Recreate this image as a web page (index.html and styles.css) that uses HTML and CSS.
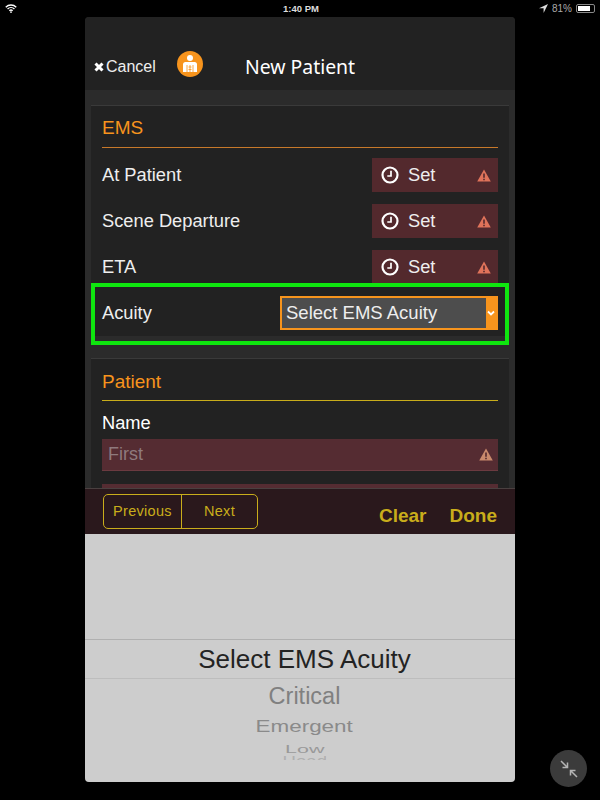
FILE: index.html
```html
<!DOCTYPE html>
<html lang="en">
<head>
  <meta charset="UTF-8" />
  <title>New Patient</title>
  <link rel="stylesheet" href="styles.css">
</head>
<body>

  <div class="status-bar">
    <svg class="wifi" width="12" height="9" viewBox="0 0 16 12">
      <path d="M1 4.200a10 10 0 0 1 14 0M3.400 6.700a6.600 6.600 0 0 1 9.200 0M5.800 9a3.200 3.200 0 0 1 4.400 0" fill="none" stroke="#fff" stroke-width="1.800"/>
      <circle cx="8" cy="10.800" r="1.200" fill="#fff"/>
    </svg>
    <span class="status-time">1:40 PM</span>
    <div class="status-right">
      <svg width="9" height="9" viewBox="0 0 9 9"><path d="M9 0 0 4.200h4.600V9z" fill="#ddd"/></svg>
      <span>81%</span>
      <div class="battery"><div class="battery-fill"></div></div>
    </div>
  </div>

  <div class="modal">
    <div class="modal-header">
      <div class="cancel">
        <svg width="10" height="10" viewBox="0 0 10 10"><path d="M1.500 1.500 8.500 8.500M8.500 1.500 1.500 8.500" stroke="#fff" stroke-width="3"/></svg>
        <span>Cancel</span>
      </div>
      <div class="patient-icon">
        <svg width="22" height="22" viewBox="0 0 22 22">
          <circle cx="11" cy="5" r="3" fill="#fff"/>
          <path d="M4 19v-7.500Q4 9 6.500 9h9q2.500 0 2.500 2.500V19z" fill="#fff"/>
          <path d="M8 12v7M14 12v7M11 12v7M9.500 14h3M9.500 16.500h3" stroke="#f7941d" stroke-width=".8" fill="none"/>
        </svg>
      </div>
      <h1>New Patient</h1>
    </div>

    <div class="form-scroll">
      <section class="panel">
        <h2>EMS</h2>
        <div class="row">
          <span>At Patient</span>
          <div class="set-btn">
            <svg width="18" height="18" viewBox="0 0 18 18"><circle cx="9" cy="9" r="7.500" fill="none" stroke="#fff" stroke-width="2.200"/><path d="M10 4.800V10H6.300" fill="none" stroke="#fff" stroke-width="1.700"/></svg>
            <span>Set</span>
            <svg width="14" height="13" viewBox="0 0 14 13"><path d="M7 .5 13.800 12.500H.2z" fill="#e0735a"/><path d="M6.200 4.500h1.600v4.300H6.200zM6.200 9.700h1.600v1.500H6.200z" fill="#53292d"/></svg>
          </div>
        </div>
        <div class="row">
          <span>Scene Departure</span>
          <div class="set-btn">
            <svg width="18" height="18" viewBox="0 0 18 18"><circle cx="9" cy="9" r="7.500" fill="none" stroke="#fff" stroke-width="2.200"/><path d="M10 4.800V10H6.300" fill="none" stroke="#fff" stroke-width="1.700"/></svg>
            <span>Set</span>
            <svg width="14" height="13" viewBox="0 0 14 13"><path d="M7 .5 13.800 12.500H.2z" fill="#e0735a"/><path d="M6.200 4.500h1.600v4.300H6.200zM6.200 9.700h1.600v1.500H6.200z" fill="#53292d"/></svg>
          </div>
        </div>
        <div class="row">
          <span>ETA</span>
          <div class="set-btn">
            <svg width="18" height="18" viewBox="0 0 18 18"><circle cx="9" cy="9" r="7.500" fill="none" stroke="#fff" stroke-width="2.200"/><path d="M10 4.800V10H6.300" fill="none" stroke="#fff" stroke-width="1.700"/></svg>
            <span>Set</span>
            <svg width="14" height="13" viewBox="0 0 14 13"><path d="M7 .5 13.800 12.500H.2z" fill="#e0735a"/><path d="M6.200 4.500h1.600v4.300H6.200zM6.200 9.700h1.600v1.500H6.200z" fill="#53292d"/></svg>
          </div>
        </div>
        <div class="row acuity-row">
          <span>Acuity</span>
          <div class="acuity-select">
            <span class="acuity-value">Select EMS Acuity</span>
            <div class="acuity-arrow">
              <svg width="8" height="6" viewBox="0 0 8 6"><path d="M1 1.500 4 4.500 7 1.500" fill="none" stroke="#fff" stroke-width="1.800"/></svg>
            </div>
          </div>
        </div>
      </section>

      <section class="panel patient-panel">
        <h2>Patient</h2>
        <div class="field-label">Name</div>
        <div class="text-field">
          <span>First</span>
          <svg width="14" height="13" viewBox="0 0 14 13"><path d="M7 .5 13.800 12.500H.2z" fill="#c98a6c"/><path d="M6.200 4.500h1.600v4.300H6.200zM6.200 9.700h1.600v1.500H6.200z" fill="#53292d"/></svg>
        </div>
        <div class="text-field"></div>
      </section>

      <div class="keyboard-bar">
        <div class="nav-group">
          <div class="nav-btn">Previous</div>
          <div class="nav-btn">Next</div>
        </div>
        <div class="bar-actions">
          <span>Clear</span>
          <span>Done</span>
        </div>
      </div>
    </div>

    <div class="picker">
      <div class="picker-selected">Select EMS Acuity</div>
      <div class="picker-item item-1">Critical</div>
      <div class="picker-item item-2">Emergent</div>
      <div class="picker-item item-3">Low</div>
      <div class="picker-item item-4">Head</div>
    </div>
  </div>

  <div class="zoom-btn">
    <svg width="20" height="20" viewBox="0 0 20 20">
      <path d="M2 2 8.500 8.500M8.500 3.500V8.500H3.500M18 18 11.500 11.500M11.500 16.500V11.500H16.500" fill="none" stroke="#b4b4b4" stroke-width="1.500"/>
    </svg>
  </div>

</body>
</html>
```

FILE: styles.css
```css
html, body {
  margin: 0;
  height: 800px;
  overflow: hidden;
}

body {
  position: relative;
  background-color: #000;
  font-family: "Liberation Sans", Arial, sans-serif;
  color: #fff;
}

.status-bar {
  display: flex;
  align-items: center;
  justify-content: space-between;
  position: relative;
  height: 16px;
  padding: 0 5px;
  font-size: 10px;
  color: #ddd;
}

.status-time {
  position: absolute;
  left: 283px;
  top: 3px;
  font-weight: bold;
  font-size: 9.5px;
}

.status-right {
  display: flex;
  align-items: center;
  gap: 4px;
  color: #aaa;
}

.battery {
  width: 15px;
  height: 5px;
  padding: 1px;
  border: 1px solid #888;
  border-radius: 2px;
}

.battery-fill {
  width: 81%;
  height: 100%;
  background-color: #fff;
}

.modal {
  display: flex;
  flex-direction: column;
  width: 430px;
  height: 765px;
  margin: 1px 0 0 85px;
  border-radius: 4px;
  overflow: hidden;
  background-color: #232323;
}

.modal-header {
  display: flex;
  align-items: center;
  flex-shrink: 0;
  height: 73px;
  padding: 26px 0 0 9px;
  box-sizing: border-box;
  background-color: #222;
}

.cancel {
  display: flex;
  align-items: center;
  gap: 2px;
  width: 83px;
  font-size: 16px;
  color: #eee;
}

.patient-icon {
  display: flex;
  align-items: center;
  justify-content: center;
  width: 26px;
  height: 26px;
  margin-bottom: 5px;
  border-radius: 50%;
  background-color: #f7941d;
}

.modal-header h1 {
  margin: 0 0 0 42px;
  font-family: "Noto Sans", sans-serif;
  font-size: 19.4px;
  font-weight: 400;
}

.form-scroll {
  position: relative;
  flex-shrink: 0;
  height: 444px;
  padding: 15px 6px 0;
  overflow: hidden;
  box-sizing: border-box;
  background-color: #2b2b2b;
}

.panel {
  padding: 0 11px;
  border-top: 1px solid #3a3a3a;
  background-color: #222;
}

.panel h2 {
  margin: 0;
  padding: 10px 0 7px;
  border-bottom: 1px solid #c8792a;
  font-size: 19px;
  line-height: 24px;
  font-weight: 400;
  color: #f7941d;
}

.row {
  display: flex;
  align-items: center;
  justify-content: space-between;
  height: 46px;
  font-size: 18.3px;
  color: #eee;
}

.panel h2 + .row {
  margin-top: 4px;
}

.set-btn {
  display: flex;
  align-items: center;
  width: 126px;
  height: 34px;
  padding: 0 7px 0 9px;
  box-sizing: border-box;
  background-color: #53292d;
}

.set-btn span {
  flex: 1;
  margin-left: 9px;
}

.acuity-row {
  position: relative;
  margin-bottom: 22px;
}

/* green callout drawn over the row and the ETA button above it */
.acuity-row::after {
  content: "";
  position: absolute;
  top: -7px;
  bottom: -9px;
  left: -11px;
  right: -11px;
  border: 4px solid #0fe60f;
}

.acuity-select {
  display: flex;
  width: 218px;
  height: 34px;
  box-sizing: border-box;
  border: 2px solid #f7941d;
  background-color: #4d4d4d;
}

.acuity-value {
  flex: 1;
  padding-left: 4px;
  line-height: 29px;
  font-size: 18.5px;
}

.acuity-arrow {
  display: flex;
  align-items: center;
  justify-content: center;
  width: 10px;
  background-color: #f7941d;
}

.patient-panel h2 {
  padding: 11px 0 6px;
  border-bottom-color: #c9ad1b;
}

.field-label {
  margin-top: 12px;
  font-size: 18.3px;
  line-height: 20px;
  color: #fff;
}

.text-field {
  display: flex;
  align-items: center;
  justify-content: space-between;
  height: 31px;
  margin-top: 6px;
  padding: 0 5px 0 6px;
  border-bottom: 1px solid #6b3a40;
  background-color: #552c32;
  font-size: 18px;
  color: #8f7a7d;
}

.text-field + .text-field {
  margin-top: 13px;
}

.keyboard-bar {
  position: absolute;
  left: 0;
  right: 0;
  bottom: 0;
  display: flex;
  align-items: center;
  justify-content: space-between;
  height: 46px;
  padding: 0 18px;
  box-sizing: border-box;
  border-top: 1px solid #4a4040;
  background-color: #2a181c;
}

.nav-group {
  display: flex;
  width: 155px;
  height: 35px;
  box-sizing: border-box;
  border: 1px solid #c9ad1b;
  border-radius: 5px;
}

.nav-btn {
  flex: 0 0 77px;
  line-height: 33px;
  text-align: center;
  font-size: 14.5px;
  letter-spacing: .3px;
  color: #c9ad1b;
}

.nav-btn + .nav-btn {
  flex: 1;
  border-left: 1px solid #c9ad1b;
}

.bar-actions {
  display: flex;
  gap: 23px;
  margin-top: 8px;
  font-size: 19px;
  font-weight: bold;
  color: #c9ad1b;
}

.picker {
  flex: 1;
  display: flex;
  flex-direction: column;
  align-items: center;
  padding-top: 105px;
  overflow: hidden;
  background-color: #cdcdcd;
}

.picker-selected {
  align-self: stretch;
  height: 38px;
  padding-left: 9px;
  border-top: 1px solid #b0b0b0;
  border-bottom: 1px solid #bdbdbd;
  line-height: 38px;
  text-align: center;
  font-size: 26px;
  color: #232323;
}

.picker-item {
  margin-left: 9px;
  text-align: center;
}

.item-1 {
  margin-top: 3px;
  font-size: 23.5px;
  line-height: 28px;
  color: #808080;
}

.item-2 {
  margin-top: 5px;
  font-size: 19px;
  line-height: 24px;
  color: #8a8a8a;
  transform: scale(1.18, .85);
}

.item-3 {
  margin-top: 1px;
  font-size: 15px;
  line-height: 18px;
  color: #999;
  transform: scale(1.43, .7);
}

.item-4 {
  height: 4px;
  margin-top: -2px;
  overflow: hidden;
  font-size: 14px;
  line-height: 10px;
  color: #b0b0b0;
  transform: scaleX(1.33);
}

.zoom-btn {
  position: absolute;
  left: 550px;
  top: 750px;
  display: flex;
  align-items: center;
  justify-content: center;
  width: 37px;
  height: 37px;
  border-radius: 50%;
  background-color: #3b3b3b;
}
```
